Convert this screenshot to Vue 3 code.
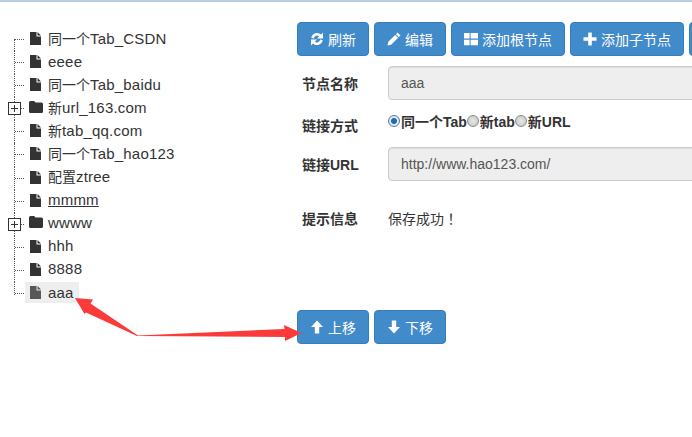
<script setup>
// 左侧节点树 + 右侧表单
const nodes = [
  { name: '同一个Tab_CSDN' },
  { name: 'eeee' },
  { name: '同一个Tab_baidu' },
  { name: '新url_163.com', folder: true },
  { name: '新tab_qq.com' },
  { name: '同一个Tab_hao123' },
  { name: '配置ztree' },
  { name: 'mmmm', link: true },
  { name: 'wwww', folder: true },
  { name: 'hhh' },
  { name: '8888' },
  { name: 'aaa', selected: true },
]

// 中文和英文分开，英文字号要大一点
const parts = (name) => name.split(/([\u4e00-\u9fff]+)/).filter(Boolean)
const isCjk = (s) => /[\u4e00-\u9fff]/.test(s)
</script>

<template>
  <div class="page">
    <ul class="tree">
      <li v-for="(n, i) in nodes" :key="i" class="node" :class="{ last: i === nodes.length - 1 }">
        <span v-if="n.folder" class="switch"></span>
        <span class="item" :class="{ selected: n.selected }">
          <svg v-if="n.folder" class="ico folder" viewBox="0 0 14 12"><path d="M1.500 0h3.600l1.400 1.600h6A1.500 1.500 0 0 1 14 3.100v7.400a1.500 1.500 0 0 1-1.500 1.500h-11A1.500 1.500 0 0 1 0 10.500v-9A1.500 1.500 0 0 1 1.500 0z" /></svg>
          <svg v-else class="ico file" viewBox="0 0 11 13"><path d="M0 0h6.500v4.500H11V13H0z" /><path d="M7.500 0L11 3.500H7.500z" /></svg>
          <span class="name" :class="{ link: n.link }"><span v-for="(p, j) in parts(n.name)" :key="j" :class="{ latin: !isCjk(p) }">{{ p }}</span></span>
        </span>
      </li>
    </ul>

    <div class="panel">
      <div class="toolbar">
        <button class="btn">
          <svg class="gl" viewBox="0 0 14 14"><path d="M1.300 5.800A5.900 5.900 0 0 1 11 2.400L13 0.500V6.500H7L9.200 4.300A3.400 3.400 0 0 0 3.800 6.500z" /><path d="M12.700 8.200A5.900 5.900 0 0 1 3 11.600L1 13.500V7.500H7L4.800 9.700A3.400 3.400 0 0 0 10.200 7.500z" /></svg>刷新
        </button>
        <button class="btn">
          <svg class="gl" viewBox="0 0 14 14"><path d="M10.600 0.500L13.500 3.400 11.800 5.100 8.900 2.200zM8.200 2.900L11.100 5.800 4.200 12.700 0.500 13.500 1.300 9.800z" /></svg>编辑
        </button>
        <button class="btn wide">
          <svg class="gl" viewBox="0 0 14 14"><path d="M0 1h5.600v5.600H0zM6.600 1H14v5.600H6.600zM0 7.800h5.600v5.400H0zM6.600 7.800H14v5.400H6.600z" /></svg>添加根节点
        </button>
        <button class="btn wide">
          <svg class="gl" viewBox="0 0 14 14"><path d="M5.200 0.500h3.600v4.700h4.700v3.600H8.800v4.700H5.200V8.800H0.500V5.200h4.700z" /></svg>添加子节点
        </button>
        <button class="btn wide"></button>
      </div>

      <div class="row first">
        <label class="lbl">节点名称</label>
        <input class="field" value="aaa" readonly />
      </div>

      <div class="row radios">
        <label class="lbl">链接方式</label>
        <div class="opts">
          <input type="radio" class="radio" name="kind" checked /><span>同一个Tab</span>
          <input type="radio" class="radio" name="kind" /><span>新tab</span>
          <input type="radio" class="radio" name="kind" /><span>新URL</span>
        </div>
      </div>

      <div class="row">
        <label class="lbl">链接URL</label>
        <input class="field" value="http://www.hao123.com/" readonly />
      </div>

      <div class="row tip">
        <label class="lbl">提示信息</label>
        <span class="msg">保存成功！</span>
      </div>

      <div class="toolbar move">
        <button class="btn">
          <svg class="gl" viewBox="0 0 14 14"><path d="M7 0.500L13 7H9.200v6.500H4.800V7H1z" /></svg>上移
        </button>
        <button class="btn">
          <svg class="gl" viewBox="0 0 14 14"><path d="M7 13.500L1 7h3.800V0.500h4.400V7H13z" /></svg>下移
        </button>
      </div>
    </div>

    <!-- 截图上的标注箭头 -->
    <svg class="notes" width="692" height="437" viewBox="0 0 692 437">
      <path fill="#fb3a3a" d="M75 298L93 299.500 90.500 303.500 138 335.500 284.500 329 284 325 301.500 333 285 341 285 337 137 336 86 312.500 84.500 314z" />
    </svg>
  </div>
</template>

<style>
body {
  margin: 0;
  background: #fff;
  overflow: hidden;
}
</style>

<style scoped>
.page {
  display: flex;
  width: 692px;
  height: 437px;
  box-sizing: border-box;
  border-top: 2px solid #b8cce4;
  overflow: hidden;
  position: relative;
  font-family: "Liberation Sans", "Noto Sans CJK SC", sans-serif;
  font-size: 14px;
  color: #333;
}

.tree {
  list-style: none;
  margin: 0;
  padding: 26px 0 0 25px;
  width: 297px;
  box-sizing: border-box;
  flex: none;
}

.node {
  position: relative;
  height: 23.100px;
  line-height: 22px;
}

/* 虚线 */
.node::before {
  content: "";
  position: absolute;
  left: -11px;
  top: 0;
  bottom: 0;
  border-left: 1px dotted #555;
}

.node::after {
  content: "";
  position: absolute;
  left: -10px;
  top: 11px;
  width: 9px;
  border-top: 1px dotted #555;
}

.node:first-child::before {
  top: 11px;
}

.node.last::before {
  bottom: 10px;
}

.switch {
  position: absolute;
  z-index: 1;
  left: -17px;
  top: 5px;
  width: 11px;
  height: 11px;
  border: 1px solid #333;
  background:
    linear-gradient(#333, #333) center / 7px 1px no-repeat,
    linear-gradient(#333, #333) center / 1px 7px no-repeat,
    #fff;
}

.item {
  display: inline-flex;
  align-items: center;
  height: 21px;
  padding: 0 5px;
  vertical-align: top;
}

.item.selected {
  background: #eee;
}

.item.selected .ico {
  opacity: 0.8;
}

.ico {
  fill: #333;
  flex: none;
}

.file {
  width: 11px;
  height: 13px;
  margin-right: 7px;
}

.folder {
  width: 14px;
  height: 12px;
  margin-left: -1px;
  margin-right: 5px;
  margin-top: -2px;
}

.name {
  color: #333;
}

.name.link {
  text-decoration: underline;
}

.latin {
  font-size: 15px;
  letter-spacing: 0.2px;
}

.panel {
  flex: none;
  width: 395px;
  padding-top: 20px;
}

.toolbar {
  display: flex;
  gap: 5px;
}

.btn {
  flex: none;
  width: 72px;
  height: 34px;
  padding: 0;
  box-sizing: border-box;
  display: inline-flex;
  align-items: center;
  justify-content: center;
  background: #428bca;
  border: 1px solid #357ebd;
  border-radius: 4px;
  color: #fff;
  font: inherit;
}

.btn.wide {
  width: 114px;
}

.gl {
  width: 14px;
  height: 14px;
  fill: #fff;
  margin-right: 4px;
}

.row {
  display: flex;
  align-items: center;
  margin-top: 10px;
}

.lbl {
  width: 91px;
  padding-left: 5px;
  box-sizing: border-box;
  flex: none;
  font-weight: bold;
}

.field {
  width: 340px;
  height: 34px;
  flex: none;
  box-sizing: border-box;
  padding: 6px 12px;
  background: #eee;
  border: 1px solid #ccc;
  border-radius: 4px;
  color: #555;
  font: inherit;
  box-shadow: inset 0 1px 1px rgba(0, 0, 0, 0.075);
  outline: none;
}

.radios {
  align-items: flex-start;
  height: 27px;
  margin-top: 10px;
}

.radios .lbl {
  padding-top: 5px;
}

.opts {
  display: flex;
  align-items: center;
  font-weight: bold;
  height: 22px;
}

.radio {
  appearance: none;
  width: 12px;
  height: 12px;
  margin: 0 1px 0 0;
  border-radius: 50%;
  border: 1px solid #8a8a8a;
  background: radial-gradient(circle, #e8e8e8, #c4c4c4);
  box-sizing: border-box;
}

.radio:checked {
  background: radial-gradient(circle, #1c6fb5 0 2.500px, #e0e8f0 3.500px);
  border-color: #5a7a98;
}

.tip {
  margin-top: 27px;
}

.msg {
  font-family: "Liberation Sans", "Noto Sans CJK TC", sans-serif;
}

.move {
  margin-top: 82px;
}

.notes {
  position: absolute;
  left: 0;
  top: -2px;
  pointer-events: none;
}
</style>
